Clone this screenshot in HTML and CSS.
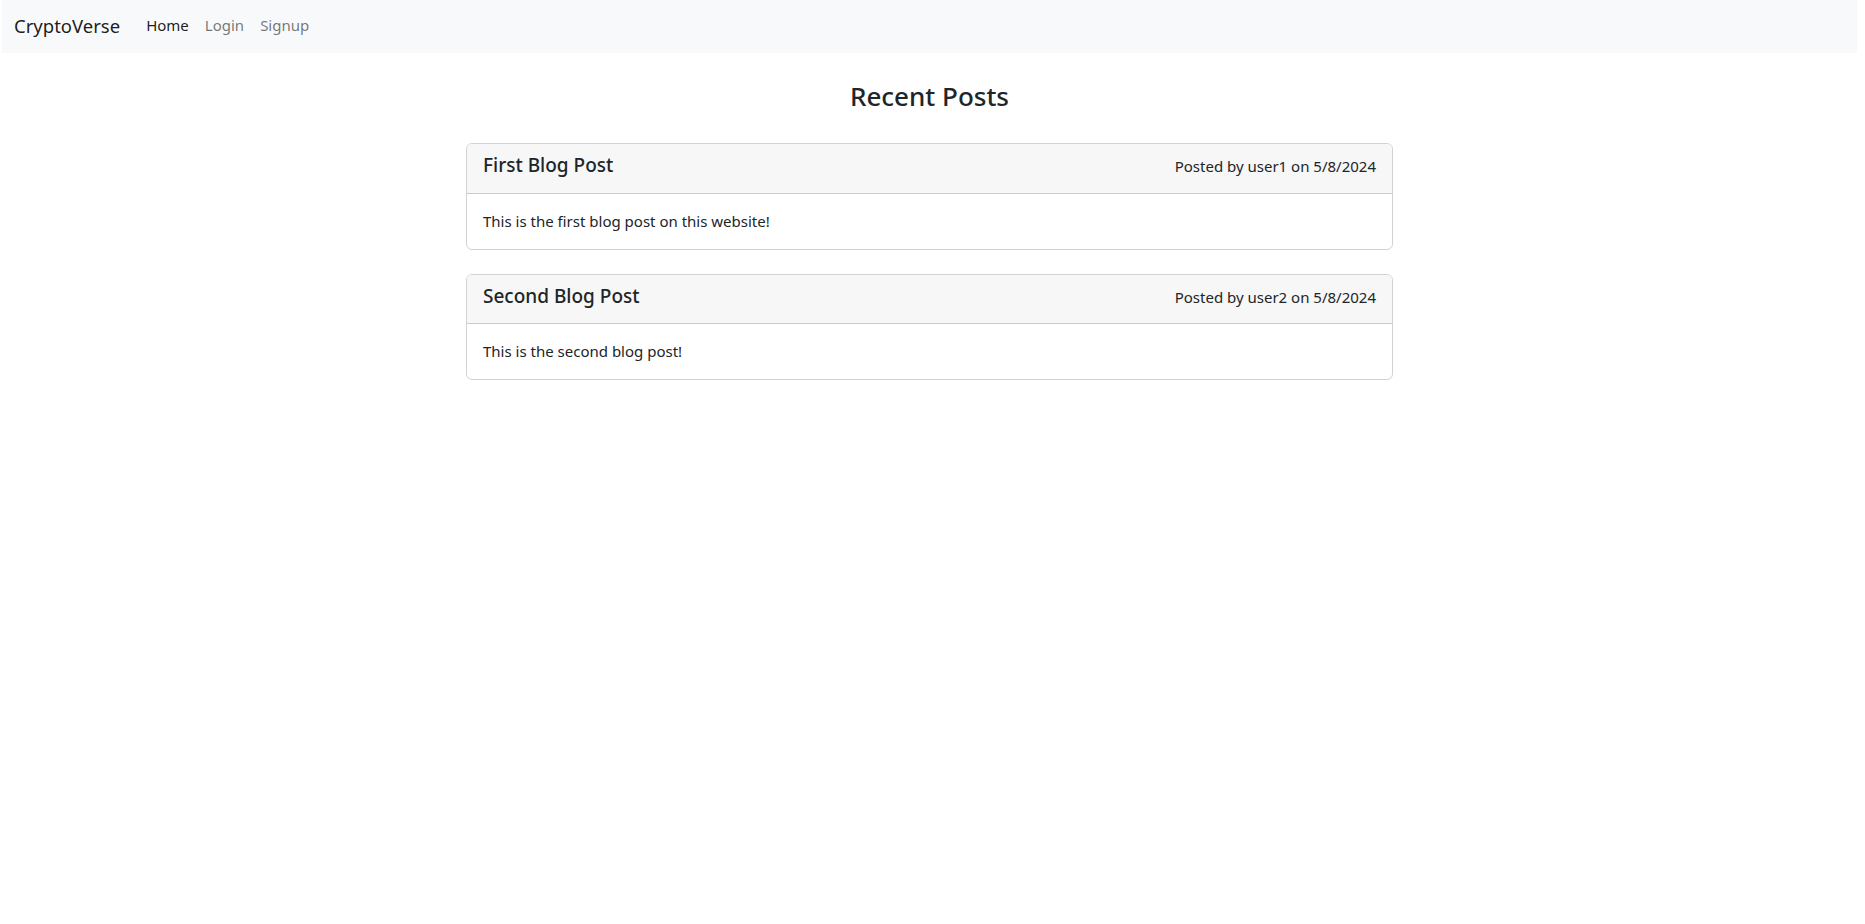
FILE: index.html
```html
<!DOCTYPE html>
<html lang="en">
<head>
<meta charset="utf-8">
<title>CryptoVerse</title>
<link rel="stylesheet" href="styles.css">
</head>
<body>
<div class="page">
  <nav class="navbar">
    <a class="brand" href="#">CryptoVerse</a>
    <ul class="nav">
      <li><a class="nav-link active" href="#">Home</a></li>
      <li><a class="nav-link" href="#">Login</a></li>
      <li><a class="nav-link" href="#">Signup</a></li>
    </ul>
  </nav>
  <main class="content">
    <h2 class="page-title">Recent Posts</h2>
    <article class="card">
      <header class="card-header">
        <h5 class="card-title">First Blog Post</h5>
        <span class="card-meta">Posted by user1 on 5/8/2024</span>
      </header>
      <div class="card-body">
        <p class="card-text">This is the first blog post on this website!</p>
      </div>
    </article>
    <article class="card">
      <header class="card-header">
        <h5 class="card-title">Second Blog Post</h5>
        <span class="card-meta">Posted by user2 on 5/8/2024</span>
      </header>
      <div class="card-body">
        <p class="card-text">This is the second blog post!</p>
      </div>
    </article>
  </main>
</div>
</body>
</html>
```

FILE: styles.css
```css
* { box-sizing: border-box; }

html, body {
  margin: 0;
  padding: 0;
  background: #fff;
}

body {
  font-family: "Noto Sans", "Open Sans", sans-serif;
  color: #212529;
  font-size: 16px;
  line-height: 1.5;
}

.page {
  margin: 0 8px 0 2px;
}

.navbar {
  display: flex;
  align-items: center;
  height: 53px;
  padding: 0 12px;
  background: #f8f9fa;
}

.brand {
  font-size: 18.5px;
  line-height: 30px;
  color: rgba(0, 0, 0, 0.9);
  text-decoration: none;
  margin-right: 18px;
  padding-bottom: 2px;
}

.nav {
  display: flex;
  list-style: none;
  margin: 0;
  padding: 0;
}

.nav-link {
  display: block;
  padding: 0 8px 3px;
  font-size: 15px;
  line-height: 24px;
  color: rgba(0, 0, 0, 0.55);
  text-decoration: none;
}

.nav-link.active {
  color: rgba(0, 0, 0, 0.9);
}

.content {
  width: 927px;
  margin: 0 auto;
  padding-top: 24px;
}

.page-title {
  margin: 0 0 28px;
  text-align: center;
  font-size: 26px;
  font-weight: 500;
  line-height: 38px;
}

.card {
  border: 1px solid rgba(0, 0, 0, 0.175);
  border-radius: 6px;
  margin-bottom: 24px;
  overflow: hidden;
}

.card-header {
  display: flex;
  justify-content: space-between;
  align-items: baseline;
  padding: 9px 16px 15px;
  background: #f7f7f7;
  border-bottom: 1px solid rgba(0, 0, 0, 0.175);
}

.card-title {
  margin: 0;
  font-size: 19px;
  font-weight: 500;
  line-height: 24px;
}

.card-meta {
  font-size: 15px;
}

.card-body {
  padding: 15px 16px 16px;
}

.card-text {
  margin: 0;
  font-size: 15px;
  line-height: 24px;
}
```
